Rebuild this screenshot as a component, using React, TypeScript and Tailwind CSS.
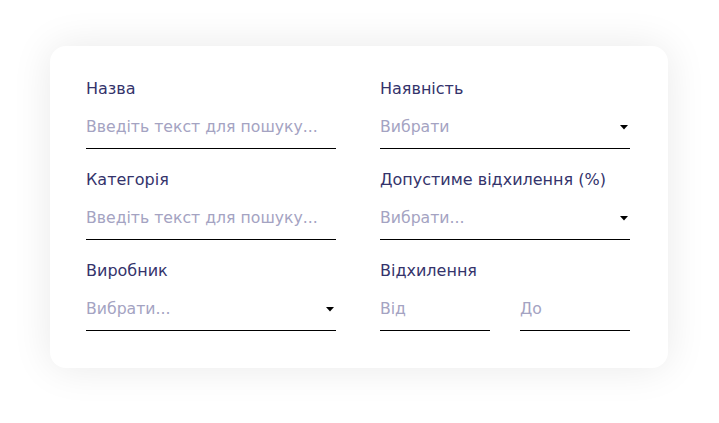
import React from 'react';

const font = { fontFamily: '"DejaVu Sans", sans-serif' };

const Caret = () => (
  <svg width="8" height="5" viewBox="0 0 8 5" className="shrink-0">
    <path d="M0 0h8L4 4.5z" fill="#000" />
  </svg>
);

const Label: React.FC<{ children: React.ReactNode }> = ({ children }) => (
  <div className="h-5 leading-5 text-[16px] text-[#34336b] mb-[7px] whitespace-nowrap">{children}</div>
);

const TextInput: React.FC<{ placeholder: string }> = ({ placeholder }) => (
  <div className="h-[43px] border-b border-black flex items-center">
    <span className="text-[15.7px] text-[#a4a3c2] whitespace-nowrap">{placeholder}</span>
  </div>
);

const SelectInput: React.FC<{ placeholder: string }> = ({ placeholder }) => (
  <div className="h-[43px] border-b border-black flex items-center justify-between pr-[2px]">
    <span className="text-[15.7px] text-[#a4a3c2] whitespace-nowrap">{placeholder}</span>
    <Caret />
  </div>
);

export default function App() {
  return (
    <div className="w-[719px] h-[423px] bg-white flex items-start pt-[46px] pl-[50px]" style={font}>
      <div className="w-[618px] h-[322px] bg-white rounded-2xl shadow-[0_0_40px_rgba(0,0,0,0.09)] pt-[33px] pl-[36px] pr-[38px]">
        <div className="grid grid-cols-2 gap-x-[44px] gap-y-[21px]">
          <div>
            <Label>Назва</Label>
            <TextInput placeholder="Введіть текст для пошуку..." />
          </div>
          <div>
            <Label>Наявність</Label>
            <SelectInput placeholder="Вибрати" />
          </div>
          <div>
            <Label>Категорія</Label>
            <TextInput placeholder="Введіть текст для пошуку..." />
          </div>
          <div>
            <Label>Допустиме відхилення (%)</Label>
            <SelectInput placeholder="Вибрати..." />
          </div>
          <div>
            <Label>Виробник</Label>
            <SelectInput placeholder="Вибрати..." />
          </div>
          <div>
            <Label>Відхилення</Label>
            <div className="flex gap-[30px]">
              <div className="flex-1">
                <TextInput placeholder="Від" />
              </div>
              <div className="flex-1">
                <TextInput placeholder="До" />
              </div>
            </div>
          </div>
        </div>
      </div>
    </div>
  );
}
